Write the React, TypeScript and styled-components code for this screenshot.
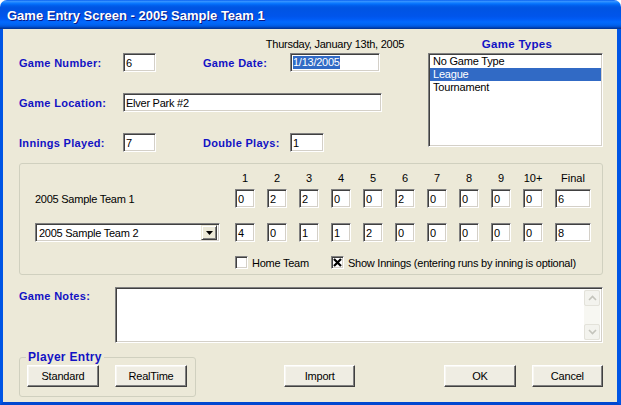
import styled, { createGlobalStyle } from 'styled-components';

const GlobalStyle = createGlobalStyle`
  html, body {
    margin: 0;
    padding: 0;
    background: #ffffff;
  }
  body {
    font-family: "Liberation Sans", Arial, sans-serif;
    font-size: 11px;
    color: #000;
  }
  * {
    box-sizing: border-box;
  }
`;

const innings = [
  { label: '1', away: '0', home: '4' },
  { label: '2', away: '2', home: '0' },
  { label: '3', away: '2', home: '1' },
  { label: '4', away: '0', home: '1' },
  { label: '5', away: '0', home: '2' },
  { label: '6', away: '2', home: '0' },
  { label: '7', away: '0', home: '0' },
  { label: '8', away: '0', home: '0' },
  { label: '9', away: '0', home: '0' },
  { label: '10+', away: '0', home: '0' },
];

const gameTypes = ['No Game Type', 'League', 'Tournament'];

function App() {
  return (
    <>
      <GlobalStyle />
      <StWindow>
        <StTitleBar>Game Entry Screen - 2005 Sample Team 1</StTitleBar>
        <StClient>
          <StTopSection>
            <StFormGrid>
              <StDateCaption>Thursday, January 13th, 2005</StDateCaption>

              <StLabel $row={2} $col={1}>Game Number:</StLabel>
              <StField $w={33} $row={2} $col={2}>6</StField>
              <StLabel $row={2} $col={3}>Game Date:</StLabel>
              <StField $w={90} $row={2} $col={4}>
                <StSelectedText>1/13/2005</StSelectedText>
              </StField>

              <StLabel $row={4} $col={1}>Game Location:</StLabel>
              <StField $w={259} $row={4} $col={2} $span={3}>Elver Park #2</StField>

              <StLabel $row={6} $col={1}>Innings Played:</StLabel>
              <StField $w={33} $row={6} $col={2}>7</StField>
              <StLabel $row={6} $col={3}>Double Plays:</StLabel>
              <StField $w={34} $row={6} $col={4}>1</StField>
            </StFormGrid>

            <StGameTypes>
              <StGroupTitle>Game Types</StGroupTitle>
              <StListBox>
                {gameTypes.map((t) => (
                  <StListItem key={t} $selected={t === 'League'}>{t}</StListItem>
                ))}
              </StListBox>
            </StGameTypes>
          </StTopSection>

          <StScoreGroup>
            <StScoreRow>
              <span />
              {innings.map((i) => (
                <StInningHead key={i.label}>{i.label}</StInningHead>
              ))}
              <StInningHead>Final</StInningHead>
            </StScoreRow>

            <StScoreRow $mt={4}>
              <StTeamName>2005 Sample Team 1</StTeamName>
              {innings.map((i) => (
                <StField key={i.label} $w={20}>{i.away}</StField>
              ))}
              <StField $w={36}>6</StField>
            </StScoreRow>

            <StScoreRow $mt={15}>
              <StDropDown>
                <span>2005 Sample Team 2</span>
                <StDropButton>
                  <svg width="7" height="4" viewBox="0 0 7 4">
                    <path d="M0 0h7L3.5 4z" fill="#000" />
                  </svg>
                </StDropButton>
              </StDropDown>
              {innings.map((i) => (
                <StField key={i.label} $w={20}>{i.home}</StField>
              ))}
              <StField $w={36}>8</StField>
            </StScoreRow>

            <StScoreRow $mt={14}>
              <StCheckItem $col="2 / span 3">
                <StCheckBox />
                Home Team
              </StCheckItem>
              <StCheckItem $col="5 / -1">
                <StCheckBox>
                  <svg width="9" height="9" viewBox="0 0 9 9">
                    <path d="M1 1l7 7M8 1l-7 7" stroke="#000" strokeWidth="2.2" />
                  </svg>
                </StCheckBox>
                Show Innings (entering runs by inning is optional)
              </StCheckItem>
            </StScoreRow>
          </StScoreGroup>

          <StNotesRow>
            <StNotesLabel>Game Notes:</StNotesLabel>
            <StNotesBox>
              <StScrollBar>
                <StScrollButton>
                  <svg width="9" height="6" viewBox="0 0 9 6">
                    <path d="M1 5l3.5-3.5L8 5" stroke="#c4c4bc" strokeWidth="1.6" fill="none" />
                  </svg>
                </StScrollButton>
                <StScrollButton>
                  <svg width="9" height="6" viewBox="0 0 9 6">
                    <path d="M1 1l3.5 3.5L8 1" stroke="#c4c4bc" strokeWidth="1.6" fill="none" />
                  </svg>
                </StScrollButton>
              </StScrollBar>
            </StNotesBox>
          </StNotesRow>

          <StBottomRow>
            <StPlayerEntry>
              <StLegend>Player Entry</StLegend>
              <StButtonRow>
                <StButton>Standard</StButton>
                <StButton>RealTime</StButton>
              </StButtonRow>
            </StPlayerEntry>
            <StButton $ml={88} $mb={10}>Import</StButton>
            <StButton $ml={89} $mb={10}>OK</StButton>
            <StButton $ml={16} $mb={10}>Cancel</StButton>
          </StBottomRow>
        </StClient>
      </StWindow>
    </>
  );
}

export default App;

const blue = '#1212c4';

const StWindow = styled.div`
  width: 621px;
  height: 405px;
  display: flex;
  flex-direction: column;
  border-radius: 7px 7px 0 0;
  overflow: hidden;
`;

const StTitleBar = styled.div`
  height: 29px;
  flex-shrink: 0;
  display: flex;
  align-items: center;
  padding: 1px 0 0 7px;
  color: #fff;
  font-weight: bold;
  font-size: 13px;
  text-shadow: 1px 1px #0a1883;
  background: linear-gradient(
    to bottom,
    #0058ee 0%,
    #3a93ff 4%,
    #288eff 7%,
    #127dff 10%,
    #036ffc 14%,
    #0262ee 18%,
    #0057e5 24%,
    #0054e3 30%,
    #0055eb 56%,
    #005bf5 66%,
    #026afe 76%,
    #0062ef 86%,
    #0052d6 92%,
    #0040ab 96%,
    #003092 100%
  );
`;

const StClient = styled.div`
  flex: 1;
  display: flex;
  flex-direction: column;
  background: #ece9d8;
  border-left: 3px solid #0055e5;
  border-right: 4px solid #0055e5;
  border-bottom: 3px solid #0047d0;
  padding: 9px 14px 0 16px;
`;

const StTopSection = styled.div`
  display: flex;
  justify-content: space-between;
  height: 114px;
`;

const StFormGrid = styled.div`
  display: grid;
  grid-template-columns: 104px 80px 87px 92px;
  grid-template-rows: 15px 19px 21px 19px 21px 19px;
`;

const StDateCaption = styled.div`
  grid-row: 1;
  grid-column: 4;
  width: 90px;
  display: flex;
  justify-content: center;
  white-space: nowrap;
  letter-spacing: -0.25px;
  line-height: 13px;
`;

const StLabel = styled.div<{ $row: number; $col: number }>`
  grid-row: ${(p) => p.$row};
  grid-column: ${(p) => p.$col};
  align-self: center;
  color: ${blue};
  font-weight: bold;
  font-size: 11px;
  letter-spacing: 0.3px;
  white-space: nowrap;
  padding-top: 1px;
`;

const StField = styled.div<{ $w: number; $row?: number; $col?: number; $span?: number }>`
  ${(p) => (p.$row ? `grid-row: ${p.$row};` : '')}
  ${(p) => (p.$col ? `grid-column: ${p.$col} / span ${p.$span || 1};` : '')}
  width: ${(p) => p.$w}px;
  height: 19px;
  display: flex;
  align-items: center;
  padding: 0 2px;
  background: #fff;
  border: 1px solid;
  border-color: #808080 #ffffff #ffffff #808080;
  box-shadow: inset 1px 1px #404040, inset -1px -1px #d4d0c8;
  letter-spacing: -0.25px;
  white-space: nowrap;
  overflow: hidden;
`;

const StSelectedText = styled.span`
  background: #316ac5;
  color: #fff;
  line-height: 13px;
`;

const StGameTypes = styled.div`
  width: 175px;
  display: flex;
  flex-direction: column;
`;

const StGroupTitle = styled.div`
  height: 15px;
  text-align: center;
  color: ${blue};
  font-weight: bold;
  font-size: 11.5px;
  letter-spacing: 0.3px;
  padding-left: 3px;
`;

const StListBox = styled.div`
  height: 94px;
  background: #fff;
  border: 1px solid;
  border-color: #808080 #ffffff #ffffff #808080;
  box-shadow: inset 1px 1px #404040, inset -1px -1px #d4d0c8;
  padding: 1px;
  display: flex;
  flex-direction: column;
`;

const StListItem = styled.div<{ $selected?: boolean }>`
  height: 13px;
  line-height: 13px;
  padding-left: 3px;
  letter-spacing: -0.2px;
  background: ${(p) => (p.$selected ? '#316ac5' : 'transparent')};
  color: ${(p) => (p.$selected ? '#fff' : '#000')};
`;

const StScoreGroup = styled.div`
  margin-top: 11px;
  height: 112px;
  border: 1px solid #d0d0bf;
  border-radius: 3px;
  padding: 8px 0 0 15px;
`;

const StScoreRow = styled.div<{ $mt?: number }>`
  display: grid;
  grid-template-columns: 188px repeat(10, 20px) 36px;
  column-gap: 12px;
  align-items: center;
  margin-top: ${(p) => p.$mt || 0}px;
`;

const StInningHead = styled.div`
  height: 13px;
  line-height: 13px;
  white-space: nowrap;
  display: flex;
  justify-content: center;
`;

const StTeamName = styled.div`
  letter-spacing: -0.25px;
`;

const StDropDown = styled.div`
  width: 185px;
  height: 19px;
  display: flex;
  align-items: center;
  justify-content: space-between;
  padding: 0 2px 0 3px;
  background: #fff;
  border: 1px solid;
  border-color: #808080 #ffffff #ffffff #808080;
  box-shadow: inset 1px 1px #404040, inset -1px -1px #d4d0c8;
  letter-spacing: -0.25px;
`;

const StDropButton = styled.div`
  width: 16px;
  height: 15px;
  display: flex;
  align-items: center;
  justify-content: center;
  background: #ece9d8;
  border: 1px solid;
  border-color: #ece9d8 #404040 #404040 #ece9d8;
  box-shadow: inset 1px 1px #fff, inset -1px -1px #808080;
`;

const StCheckItem = styled.div<{ $col: string }>`
  grid-column: ${(p) => p.$col};
  display: flex;
  align-items: center;
  gap: 4px;
  height: 13px;
  white-space: nowrap;
  letter-spacing: -0.25px;
`;

const StCheckBox = styled.div`
  width: 13px;
  height: 13px;
  flex-shrink: 0;
  display: flex;
  align-items: center;
  justify-content: center;
  background: #fff;
  border: 1px solid;
  border-color: #808080 #ffffff #ffffff #808080;
  box-shadow: inset 1px 1px #404040, inset -1px -1px #d4d0c8;
`;

const StNotesRow = styled.div`
  display: flex;
  margin-top: 12px;
`;

const StNotesLabel = styled.div`
  width: 96px;
  padding-top: 3px;
  color: ${blue};
  font-weight: bold;
  letter-spacing: 0.3px;
`;

const StNotesBox = styled.div`
  flex: 1;
  height: 56px;
  display: flex;
  justify-content: flex-end;
  padding: 2px;
  background: #fff;
  border: 1px solid;
  border-color: #808080 #ffffff #ffffff #808080;
  box-shadow: inset 1px 1px #404040, inset -1px -1px #d4d0c8;
`;

const StScrollBar = styled.div`
  width: 16px;
  display: flex;
  flex-direction: column;
  justify-content: space-between;
  background: #f7f7f2;
`;

const StScrollButton = styled.div`
  height: 16px;
  display: flex;
  align-items: center;
  justify-content: center;
  background: #f3f3ee;
  border: 1px solid #e3e2da;
  border-radius: 2px;
`;

const StBottomRow = styled.div`
  display: flex;
  margin-top: 8px;
`;

const StPlayerEntry = styled.fieldset`
  width: 176px;
  height: 46px;
  margin: 0;
  padding: 0 8px 0 7px;
  border: 1px solid #d0d0bf;
  border-radius: 3px;
`;

const StLegend = styled.legend`
  margin-left: -1px;
  padding: 0 2px;
  color: ${blue};
  font-weight: bold;
  font-size: 12px;
  line-height: 13px;
  letter-spacing: 0.3px;
`;

const StButtonRow = styled.div`
  display: flex;
  gap: 16px;
  margin-top: 1px;
`;

const StButton = styled.button<{ $ml?: number; $mb?: number }>`
  width: 72px;
  height: 22px;
  align-self: flex-end;
  margin: 0 0 ${(p) => p.$mb || 0}px ${(p) => p.$ml || 0}px;
  padding: 0;
  font-family: "Liberation Sans", Arial, sans-serif;
  font-size: 11px;
  letter-spacing: -0.2px;
  color: #000;
  background: #efede3;
  border: 1px solid;
  border-color: #ffffff #404040 #404040 #ffffff;
  box-shadow: inset -1px -1px #808080, inset 1px 1px #f8f7f2;
`;
